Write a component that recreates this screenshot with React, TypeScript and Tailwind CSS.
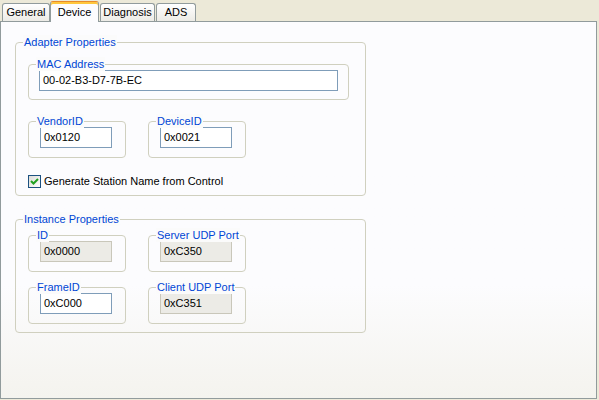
const Group = ({ label, className, children }: { label: string; className?: string; children?: React.ReactNode }) => (
  <div className={`relative rounded-[4px] border border-[#d0d0bf] ${className ?? ""}`}>
    <span className="absolute -top-[8px] left-[7px] whitespace-nowrap bg-[#fbfbfb] px-[1px] leading-[14px] text-[#0046d5]">{label}</span>
    {children}
  </div>
);

const Field = ({ value, disabled }: { value: string; disabled?: boolean }) => (
  <div
    className={`flex h-[21px] items-center border px-[3px] ${
      disabled ? "border-[#c9c7ba] bg-[#ecebe6]" : "border-[#7f9db9] bg-white"
    }`}
  >
    {value}
  </div>
);

const Small = ({ label, value, disabled }: { label: string; value: string; disabled?: boolean }) => (
  <Group label={label} className="h-[37px] w-[98px]">
    <div className="ml-[11px] mt-[5px] w-[72px]">
      <Field value={value} disabled={disabled} />
    </div>
  </Group>
);

export default function App() {
  const tabs = ["General", "Device", "Diagnosis", "ADS"];
  return (
    <div
      className="h-[400px] w-[599px] bg-[#ece9d8] text-[11px] text-black"
      style={{ fontFamily: '"Liberation Sans", Arial, sans-serif' }}
    >
      <div className="flex h-[21px] items-end pl-[2px]">
        {tabs.map((t) =>
          t === "Device" ? (
            <div key={t} className="relative z-10 -mb-px flex h-[21px] w-[49px] items-center justify-center rounded-t-[3px] border border-b-0 border-[#919b9c] border-t-[#e68b2c] bg-[#fcfcfe] shadow-[inset_0_2px_0_#ffc73c]">
              {t}
            </div>
          ) : (
            <div key={t} className={`flex h-[18px] items-center justify-center rounded-t-[3px] border border-b-0 border-[#919b9c] bg-gradient-to-b from-white to-[#ecebe6] ${t === "General" ? "w-[48px]" : t === "Diagnosis" ? "ml-[1px] w-[55px]" : "ml-[1px] w-[40px]"}`}>
              {t}
            </div>
          )
        )}
      </div>
      <div className="h-[378px] w-[597px] border border-[#919b9c] bg-gradient-to-b from-[#fcfcfe] from-70% to-[#f4f3ee] pl-[14px] pt-[20px]">
        <Group label="Adapter Properties" className="h-[154px] w-[351px] pl-[12px] pt-[21px]">
          <Group label="MAC Address" className="h-[36px] w-[321px]">
            <div className="ml-[10px] mt-[5px] w-[299px]">
              <Field value="00-02-B3-D7-7B-EC" />
            </div>
          </Group>
          <div className="mt-[21px] flex gap-[22px]">
            <Small label="VendorID" value="0x0120" />
            <Small label="DeviceID" value="0x0021" />
          </div>
          <div className="mt-[15px] flex items-center gap-[3px]">
            <div className="flex h-[13px] w-[13px] items-center justify-center border border-[#1c5180] bg-gradient-to-br from-[#dcdcd7] to-white">
              <svg width="9" height="9" viewBox="0 0 9 9">
                <path d="M1 4l2.5 2.5L8 2" fill="none" stroke="#21a121" strokeWidth="2" />
              </svg>
            </div>
            <span>Generate Station Name from Control</span>
          </div>
        </Group>
        <Group label="Instance Properties" className="mt-[23px] h-[114px] w-[351px] pl-[12px] pt-[15px]">
          <div className="flex gap-[22px]">
            <Small label="ID" value="0x0000" disabled />
            <Small label="Server UDP Port" value="0xC350" disabled />
          </div>
          <div className="mt-[15px] flex gap-[22px]">
            <Small label="FrameID" value="0xC000" />
            <Small label="Client UDP Port" value="0xC351" disabled />
          </div>
        </Group>
      </div>
    </div>
  );
}
